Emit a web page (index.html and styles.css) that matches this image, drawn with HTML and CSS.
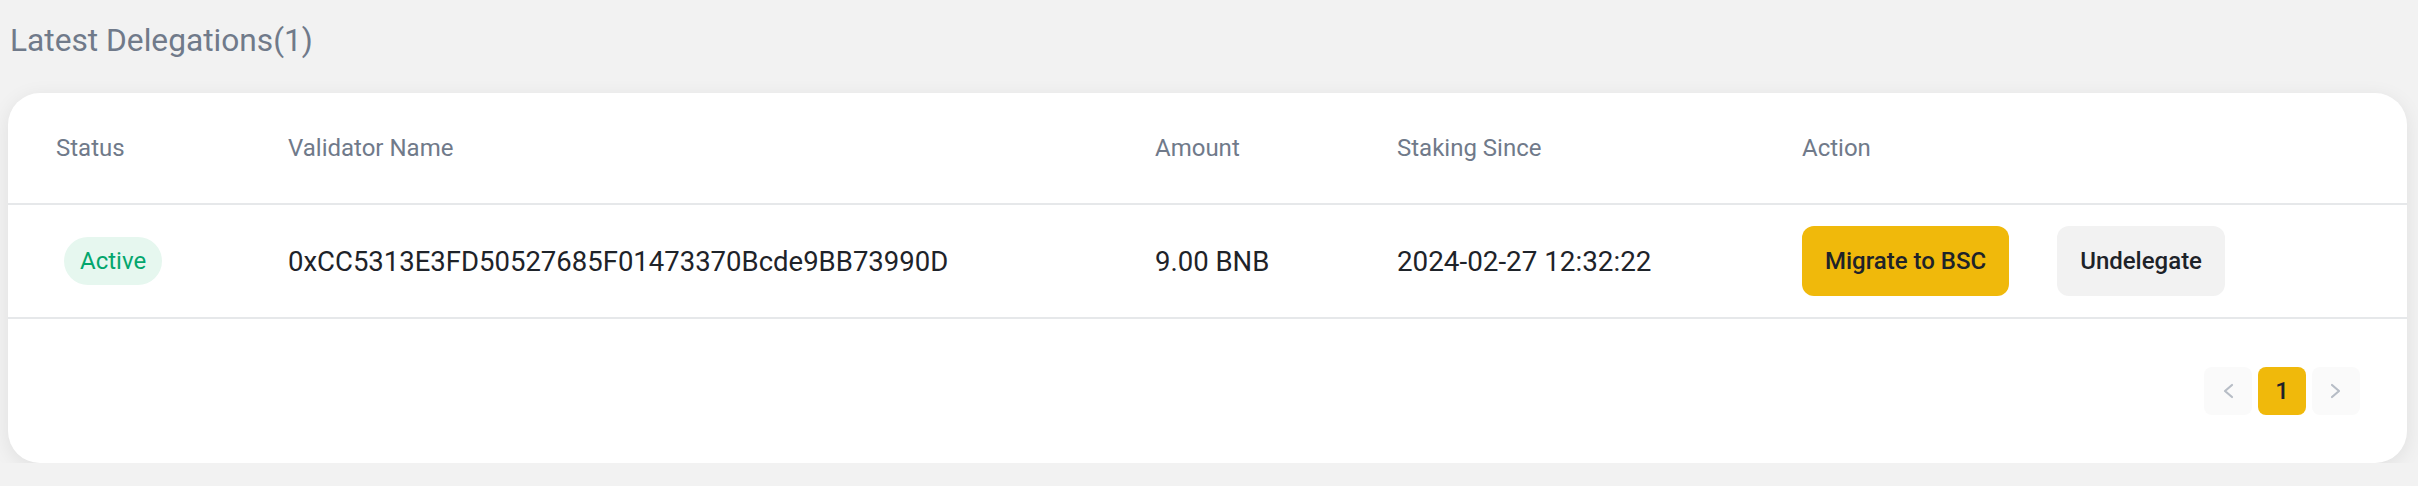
FILE: index.html
```html
<!DOCTYPE html>
<html lang="en">
<head>
<meta charset="utf-8">
<title>Latest Delegations</title>
<link rel="stylesheet" href="styles.css">
</head>
<body>
<main class="page">
  <h2 class="title">Latest Delegations(1)</h2>
  <section class="card">
    <div class="row head">
      <div class="cell">Status</div>
      <div class="cell">Validator Name</div>
      <div class="cell">Amount</div>
      <div class="cell">Staking Since</div>
      <div class="cell">Action</div>
    </div>
    <div class="row body">
      <div class="cell"><span class="pill">Active</span></div>
      <div class="cell addr">0xCC5313E3FD50527685F01473370Bcde9BB73990D</div>
      <div class="cell amount">9.00 BNB</div>
      <div class="cell date">2024-02-27 12:32:22</div>
      <div class="cell actions">
        <button class="btn primary">Migrate to BSC</button>
        <button class="btn secondary">Undelegate</button>
      </div>
    </div>
    <div class="pager">
      <button class="pg nav" aria-label="Previous"><svg width="12" height="16" viewBox="0 0 12 16"><polyline points="10,2 3,8 10,14" fill="none" stroke="#b7bdc6" stroke-width="2.2" stroke-linecap="round" stroke-linejoin="round"/></svg></button>
      <button class="pg current">1</button>
      <button class="pg nav" aria-label="Next"><svg width="12" height="16" viewBox="0 0 12 16"><polyline points="2,2 9,8 2,14" fill="none" stroke="#b7bdc6" stroke-width="2.2" stroke-linecap="round" stroke-linejoin="round"/></svg></button>
    </div>
  </section>
</main>
</body>
</html>
```
FILE: styles.css
```css
* { box-sizing: border-box; }
html, body { margin: 0; padding: 0; }
body {
  background: #f2f2f2;
  font-family: Roboto, "Liberation Sans", sans-serif;
  color: #1e2329;
}
.page {
  padding: 21px 11px 0 8px;
}
.title {
  margin: 0 0 32px 2px;
  font-size: 31.7px;
  line-height: 40px;
  font-weight: 400;
  color: #707a8a;
}
.card {
  background: #ffffff;
  border-radius: 32px;
  box-shadow: 0 4px 20px rgba(0, 0, 0, 0.08);
  overflow: hidden;
}
.row {
  display: grid;
  grid-template-columns: 232px 867px 242px 405px 1fr;
  align-items: center;
  padding-left: 48px;
  border-bottom: 2px solid #e6e8ea;
}
.row.head {
  height: 112px;
  font-size: 24px;
  color: #707a8a;
}
.row.body {
  height: 114px;
  font-size: 27.5px;
  color: #1e2329;
}
.pill {
  display: inline-flex;
  align-items: center;
  height: 48px;
  margin-left: 8px;
  padding: 0 16px;
  border-radius: 24px;
  background: #e6f7ef;
  color: #03a66d;
  font-size: 24px;
}
.date {
  font-size: 27.8px;
}
.actions {
  display: flex;
  gap: 48px;
}
.btn {
  height: 70px;
  padding: 0 23px;
  border: 0;
  border-radius: 12px;
  font-family: Roboto, "Liberation Sans", sans-serif;
  font-size: 24px;
  font-weight: 500;
  color: #1e2329;
}
.btn.primary { background: #f0b90b; }
.btn.secondary { background: #f2f2f2; }
.pager {
  display: flex;
  justify-content: flex-end;
  gap: 6px;
  padding: 48px 47px;
}
.pg {
  width: 48px;
  height: 48px;
  border: 0;
  border-radius: 8px;
  display: flex;
  align-items: center;
  justify-content: center;
  font-family: Roboto, sans-serif;
  font-size: 24px;
  font-weight: 500;
  color: #1e2329;
  padding: 0;
}
.pg.nav { background: #fafafa; }
.pg.current { background: #f0b90b; }
```
